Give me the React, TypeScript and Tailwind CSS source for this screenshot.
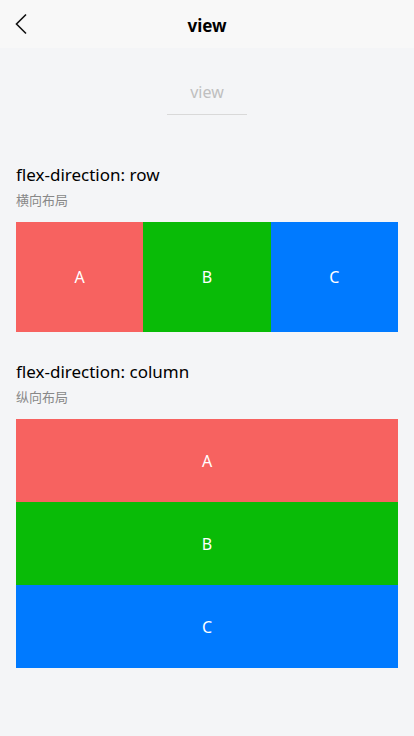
import React from "react";

const font = { fontFamily: '"Noto Sans", "Open Sans", "Noto Sans CJK SC", sans-serif' };

function Section({
  title,
  sub,
  children,
  className,
}: {
  title: string;
  sub: string;
  children: React.ReactNode;
  className?: string;
}) {
  return (
    <div className={className}>
      <div className="px-4 text-[17px] leading-6 text-black">{title}</div>
      <div className="px-4 mt-[3px] text-[13px] leading-5 text-[#888888]">{sub}</div>
      <div className="px-4 mt-3">{children}</div>
    </div>
  );
}

export default function App() {
  return (
    <div className="w-[414px] h-[736px] bg-[#f4f5f7] overflow-hidden" style={font}>
      {/* nav bar */}
      <div className="relative h-12 bg-[#f8f8f8] flex items-center justify-center pt-[3px]">
        <button className="absolute left-[14px] top-[13px] text-black">
          <svg width="14" height="22" viewBox="0 0 14 22" fill="none">
            <path d="M12 1.5 L2.5 11 L12 20.5" stroke="#111" strokeWidth="1.6" />
          </svg>
        </button>
        <span className="text-[17px] font-bold text-black">view</span>
      </div>

      <div className="flex justify-center mt-8">
        <div className="w-20 pb-[10px] border-b border-[#d9d9d9] text-center text-base leading-6 text-[#bfbfbf]">
          view
        </div>
      </div>

      <Section title="flex-direction: row" sub="横向布局" className="mt-12">
        <div className="flex h-[110px] text-white text-base">
          <div className="flex-1 bg-[#f76260] flex items-center justify-center">A</div>
          <div className="flex-1 bg-[#09bb07] flex items-center justify-center">B</div>
          <div className="flex-1 bg-[#007aff] flex items-center justify-center">C</div>
        </div>
      </Section>

      <Section title="flex-direction: column" sub="纵向布局" className="mt-7">
        <div className="flex flex-col text-white text-base">
          <div className="h-[83px] bg-[#f76260] flex items-center justify-center">A</div>
          <div className="h-[83px] bg-[#09bb07] flex items-center justify-center">B</div>
          <div className="h-[83px] bg-[#007aff] flex items-center justify-center">C</div>
        </div>
      </Section>
    </div>
  );
}
